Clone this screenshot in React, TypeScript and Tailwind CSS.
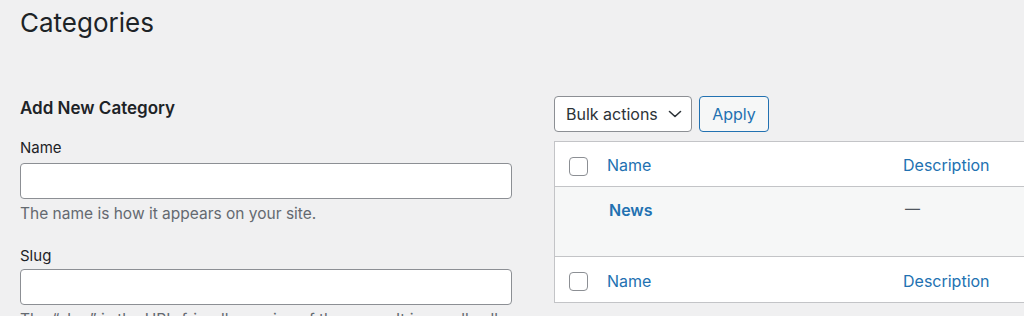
import React from "react";

function Checkbox() {
  return <div className="h-[19px] w-[19px] rounded-[4px] border border-[#8c8f94] bg-white" />;
}

export default function App() {
  return (
    <div className="h-[316px] w-[1024px] overflow-hidden bg-[#f0f0f1] pl-[20px] font-['Inter',sans-serif] text-[#1d2327]">
      <h1 className="pt-[6px] text-[26px] font-normal leading-[34px]">Categories</h1>
      <div className="flex items-start gap-[41px]">
        {/* Left column */}
        <div className="w-[493px] shrink-0">
          <h2 className="mt-[56px] text-[17px] font-semibold leading-[24px]">Add New Category</h2>
          <label className="mt-[18px] block text-[15px] leading-[20px]">Name</label>
          <div className="mt-[5px] h-[36px] w-[492px] rounded-[4px] border border-[#8c8f94] bg-white" />
          <p className="mt-[5px] text-[15.5px] leading-[20px] text-[#646970]">The name is how it appears on your site.</p>
          <label className="mt-[22px] block text-[15px] leading-[20px]">Slug</label>
          <div className="mt-[3px] h-[36px] w-[492px] rounded-[4px] border border-[#8c8f94] bg-white" />
          <p className="mt-[5px] text-[15.5px] leading-[20px] text-[#646970]">
            The “slug” is the URL-friendly version of the name. It is usually all lowercase and contains only letters, numbers, and hyphens.
          </p>
        </div>

        {/* Right column */}
        <div className="w-[520px] shrink-0">
          <div className="mt-[56px] flex items-center gap-[7px]">
            <div className="flex h-[36px] w-[138px] items-center justify-between rounded-[4px] border border-[#8c8f94] bg-white pl-[11px] pr-[9px] text-[16px] text-[#2c3338]">
              <span>Bulk actions</span>
              <svg width="14" height="14" viewBox="0 0 14 14" fill="none">
                <path d="M1.5 4.5 L7 9.5 L12.5 4.5" stroke="#2c3338" strokeWidth="1.6" strokeLinecap="round" strokeLinejoin="round" />
              </svg>
            </div>
            <div className="flex h-[36px] w-[70px] items-center justify-center rounded-[4px] border border-[#2271b1] bg-[#f6f7f7] text-[16px] text-[#2271b1]">
              Apply
            </div>
          </div>

          <div className="mt-[9px] border border-r-0 border-[#c3c4c7] bg-white">
            {/* Header */}
            <div className="flex h-[45px] border-b border-[#c3c4c7] text-[16px] leading-[20px] text-[#2271b1]">
              <div className="w-[52px] pl-[14px] pt-[15px]">
                <Checkbox />
              </div>
              <div className="w-[296px] pt-[13px]">Name</div>
              <div className="pt-[13px]">Description</div>
            </div>
            {/* Row */}
            <div className="flex h-[70px] border-b border-[#c3c4c7] bg-[#f6f7f7]">
              <div className="w-[54px]" />
              <div className="w-[294px] pt-[13px] text-[16px] font-semibold leading-[20px] text-[#2271b1]">News</div>
              <div className="pt-[12px] pl-[2px] text-[15px] leading-[20px] text-[#50575e]">—</div>
            </div>
            {/* Footer */}
            <div className="flex h-[45px] text-[16px] leading-[20px] text-[#2271b1]">
              <div className="w-[52px] pl-[14px] pt-[15px]">
                <Checkbox />
              </div>
              <div className="w-[296px] pt-[14px]">Name</div>
              <div className="pt-[14px]">Description</div>
            </div>
          </div>
        </div>
      </div>
    </div>
  );
}
